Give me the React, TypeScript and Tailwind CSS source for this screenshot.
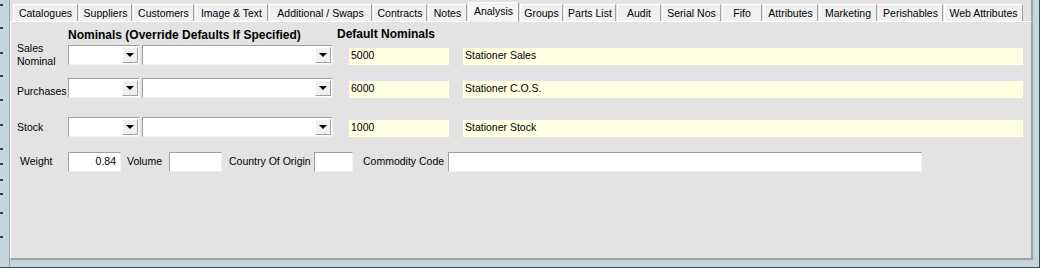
import React from "react";

const tabs: [string, number][] = [
  ["Catalogues", 65],
  ["Suppliers", 53],
  ["Customers", 61],
  ["Image & Text", 73],
  ["Additional / Swaps", 103],
  ["Contracts", 54],
  ["Notes", 39],
  ["Analysis", 51],
  ["Groups", 43],
  ["Parts List", 52],
  ["Audit", 44],
  ["Serial Nos", 59],
  ["Fifo", 40],
  ["Attributes", 55],
  ["Marketing", 58],
  ["Perishables", 65],
  ["Web Attributes", 79],
];

const rows = [
  { label: ["Sales", "Nominal"], code: "5000", name: "Stationer Sales", mt: "mt-[4px]", lab: "" },
  { label: ["Purchases"], code: "6000", name: "Stationer C.O.S.", mt: "mt-[13px]", lab: "mt-[7px]" },
  { label: ["Stock"], code: "1000", name: "Stationer Stock", mt: "mt-[19px]", lab: "" },
];

function Combo({ w }: { w: string }) {
  return (
    <div className={`${w} h-[20px] flex justify-end bg-white border-t border-l border-[#a0a0a0] border-b-[#f0f0f0] border-r-[#f0f0f0] border-b border-r p-px`}>
      <div className="w-[16px] h-full bg-[#f0f0f0] border-t border-l border-white border-b border-r border-b-[#a0a0a0] border-r-[#a0a0a0] flex items-center justify-center">
        <div className="w-0 h-0 border-l-[4px] border-r-[4px] border-t-[4px] border-l-transparent border-r-transparent border-t-black" />
      </div>
    </div>
  );
}

function Input({ w, value }: { w: string; value?: string }) {
  return (
    <div className={`${w} h-[20px] bg-white border-t border-l border-[#a0a0a0] border-b border-r border-b-[#f0f0f0] border-r-[#f0f0f0] flex items-center justify-end pr-[4px]`}>
      {value}
    </div>
  );
}

function Ticks() {
  const ys = [4, 27, 52, 75, 99, 124, 148, 163, 179, 193, 212, 236];
  return (
    <div className="relative w-[10px] h-full">
      {ys.map((y) => (
        <div key={y} className="absolute left-0 w-[3px] h-[2px] bg-[#3a3a3a]" style={{ top: y }} />
      ))}
      <div className="absolute right-0 top-0 w-px h-full bg-[#9aa8ad]" />
    </div>
  );
}

export default function App() {
  return (
    <div className="w-[1040px] h-[268px] flex bg-[#c4d6dc] font-['Liberation_Sans',Arial,sans-serif] text-[10.5px] text-black border-r border-b border-[#3c4a50] overflow-hidden whitespace-nowrap">
      <Ticks />
      <div className="flex flex-col w-[1023px]">
        <div className="h-[21px] flex items-end gap-px pl-[3px] pr-[7px] bg-[#e3e3e3] border-r-2 border-[#a0a0a0]">
          {tabs.map(([t, w]) =>
            t === "Analysis" ? (
              <div
                key={t}
                style={{ width: w }}
                className="h-[20px] -mb-px flex items-center justify-center bg-[#f4f4f4] border-t border-l border-white border-r border-r-[#a0a0a0] leading-none pb-[3px] z-10"
              >
                {t}
              </div>
            ) : (
              <div
                key={t}
                style={{ width: w }}
                className="h-[17px] flex items-center justify-center bg-[#f0f0f0] border-t border-l border-white border-r border-r-[#a0a0a0] leading-none"
              >
                {t}
              </div>
            )
          )}
        </div>
        <div className="h-[239px] bg-[#e3e3e3] border-t border-l border-white border-r-2 border-b-2 border-r-[#a0a0a0] border-b-[#a0a0a0] flex flex-col">
          <div className="flex mt-[6px] h-[13px] items-center font-bold text-[12px]">
            <div className="ml-[57px] w-[269px]">Nominals (Override Defaults If Specified)</div>
            <div className="-mt-[2px]">Default Nominals</div>
          </div>
          {rows.map((r) => (
            <div key={r.code} className={`flex items-center h-[20px] ${r.mt}`}>
              <div className={`w-[57px] pl-[6px] leading-[13px] ${r.lab}`}>
                {r.label.map((l) => (
                  <div key={l}>{l}</div>
                ))}
              </div>
              <Combo w="w-[72px]" />
              <div className="w-[2px]" />
              <Combo w="w-[191px]" />
              <div className="ml-[16px] w-[100px] h-[17px] bg-[#ffffe1] flex items-center pl-[2px] mt-[2px]">{r.code}</div>
              <div className="ml-[14px] w-[560px] h-[17px] bg-[#ffffe1] flex items-center pl-[2px] mt-[2px]">{r.name}</div>
            </div>
          ))}
          <div className="flex items-center h-[20px] mt-[15px]">
            <div className="w-[57px] pl-[9px]">Weight</div>
            <Input w="w-[53px]" value="0.84" />
            <div className="w-[48px] pl-[6px]">Volume</div>
            <Input w="w-[53px]" />
            <div className="w-[92px] pl-[7px]">Country Of Origin</div>
            <Input w="w-[39px]" />
            <div className="w-[95px] pl-[10px]">Commodity Code</div>
            <Input w="w-[474px]" />
          </div>
        </div>
        <div className="flex-1" />
      </div>
    </div>
  );
}
